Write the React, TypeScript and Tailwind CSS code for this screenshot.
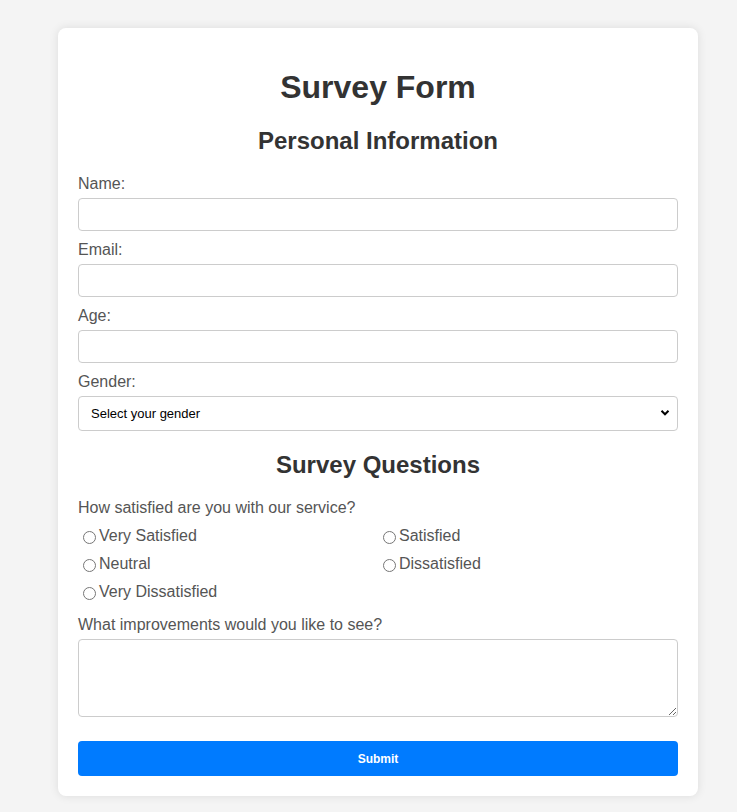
import React, { useState } from 'react';

const options = ['Very Satisfied', 'Satisfied', 'Neutral', 'Dissatisfied', 'Very Dissatisfied'];

const App: React.FC = () => {
  const [rating, setRating] = useState('');

  return (
    <div className="min-h-[812px] bg-[#f4f4f4] pt-[28px] font-['Liberation_Sans',Arial,sans-serif]">
      <div className="ml-[58px] w-[640px] rounded-[8px] bg-white px-[20px] pt-[20px] pb-[20px] shadow-[0_0_10px_rgba(0,0,0,0.1)] flow-root">
        <h1 className="mt-[21px] mb-[21px] text-center text-[32px] leading-[37px] font-bold text-[#333]">Survey Form</h1>

        {/* Personal info */}
        <h2 className="mt-[20px] mb-[20px] text-center text-[24px] leading-[28px] font-bold text-[#333]">Personal Information</h2>

        <label className="mb-[5px] block text-[16px] leading-[18px] text-[#555]">Name:</label>
        <input type="text" className="mb-[10px] block h-[33px] w-full rounded-[4px] border border-[#ccc] px-2 text-[14px] outline-none" />

        <label className="mb-[5px] block text-[16px] leading-[18px] text-[#555]">Email:</label>
        <input type="email" className="mb-[10px] block h-[33px] w-full rounded-[4px] border border-[#ccc] px-2 text-[14px] outline-none" />

        <label className="mb-[5px] block text-[16px] leading-[18px] text-[#555]">Age:</label>
        <input type="number" className="mb-[10px] block h-[33px] w-full rounded-[4px] border border-[#ccc] px-2 text-[14px] outline-none" />

        <label className="mb-[5px] block text-[16px] leading-[18px] text-[#555]">Gender:</label>
        <div className="relative mb-[10px]">
          <select className="block h-[35px] w-full appearance-none rounded-[4px] border border-[#ccc] bg-white pl-[12px] text-[13px] text-black outline-none" defaultValue="">
            <option value="">Select your gender</option>
            <option>Male</option>
            <option>Female</option>
            <option>Other</option>
          </select>
          <svg className="pointer-events-none absolute right-[8px] top-[13px]" width="10" height="8" viewBox="0 0 10 8">
            <path d="M1.5 1.8 L5 5.3 L8.5 1.8" fill="none" stroke="#000" strokeWidth="2" />
          </svg>
        </div>

        {/* Survey */}
        <h2 className="mt-[20px] mb-[20px] text-center text-[24px] leading-[28px] font-bold text-[#333]">Survey Questions</h2>

        <label className="mb-[5px] block text-[16px] leading-[18px] text-[#555]">How satisfied are you with our service?</label>
        <div className="grid grid-cols-2">
          {options.map((o) => (
            <label key={o} className="flex h-[28px] items-center text-[16px] leading-[18px] text-[#555]">
              <input
                type="radio"
                name="rating"
                checked={rating === o}
                onChange={() => setRating(o)}
                className="mt-[3px] mr-[3px] ml-[5px] h-[13px] w-[13px]"
              />
              {o}
            </label>
          ))}
        </div>

        <label className="mt-[10px] mb-[5px] block text-[16px] leading-[18px] text-[#555]">What improvements would you like to see?</label>
        <textarea className="block h-[78px] w-full rounded-[4px] border border-[#ccc] p-2 text-[14px] outline-none" />

        <button className="mt-[24px] block h-[35px] w-full rounded-[4px] bg-[#007bff] text-[12px] font-bold text-white">
          Submit
        </button>
      </div>
    </div>
  );
};

export default App;
